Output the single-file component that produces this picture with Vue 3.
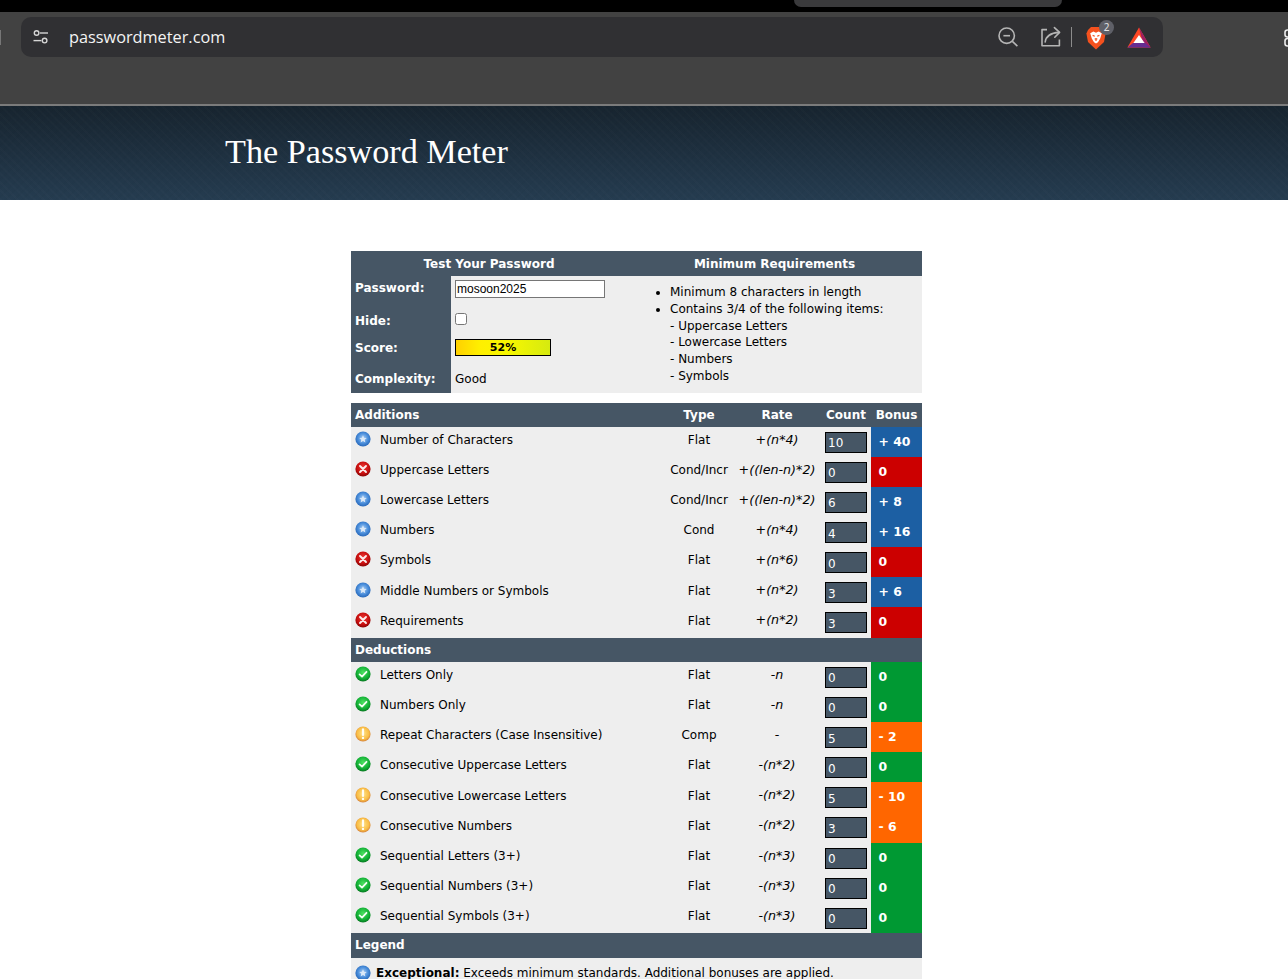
<template>
  <svg class="defs" width="0" height="0" aria-hidden="true">
    <defs>
      <radialGradient id="g-blue" cx="50%" cy="45%" r="60%">
        <stop offset="0" stop-color="#a9cdf2" /><stop offset="0.55" stop-color="#4b8fdc" /><stop offset="1" stop-color="#1f5eb0" />
      </radialGradient>
      <radialGradient id="g-red" cx="50%" cy="40%" r="62%">
        <stop offset="0" stop-color="#ee3a36" /><stop offset="0.65" stop-color="#c70e0e" /><stop offset="1" stop-color="#7f0404" />
      </radialGradient>
      <radialGradient id="g-green" cx="50%" cy="40%" r="62%">
        <stop offset="0" stop-color="#4be05f" /><stop offset="0.65" stop-color="#12b035" /><stop offset="1" stop-color="#07701f" />
      </radialGradient>
      <radialGradient id="g-amber" cx="50%" cy="45%" r="60%">
        <stop offset="0" stop-color="#ffe38a" /><stop offset="0.65" stop-color="#f9bd45" /><stop offset="1" stop-color="#c8703a" />
      </radialGradient>
      <symbol id="ico-exceed" viewBox="0 0 16 16">
        <circle cx="8" cy="8" r="7.6" fill="url(#g-blue)" />
        <path d="M8 4.2 L9.1 6.8 L11.7 7 L9.7 8.8 L10.4 11.6 L8 10 L5.6 11.6 L6.3 8.8 L4.3 7 L6.9 6.8 Z" fill="#dbe9f8" />
      </symbol>
      <symbol id="ico-fail" viewBox="0 0 16 16">
        <circle cx="8" cy="8" r="7.6" fill="url(#g-red)" />
        <path d="M5 5 L11 11 M11 5 L5 11" stroke="#fdecec" stroke-width="1.9" stroke-linecap="round" />
      </symbol>
      <symbol id="ico-pass" viewBox="0 0 16 16">
        <circle cx="8" cy="8" r="7.6" fill="url(#g-green)" />
        <path d="M4.6 8.4 L7 10.6 L11.5 5.8" fill="none" stroke="#f4fff4" stroke-width="1.8" stroke-linecap="round" stroke-linejoin="round" />
      </symbol>
      <symbol id="ico-warn" viewBox="0 0 16 16">
        <circle cx="8" cy="8" r="7.6" fill="url(#g-amber)" />
        <path d="M8 3.4 V9" stroke="#fffdf4" stroke-width="2.2" stroke-linecap="round" />
        <circle cx="8" cy="11.9" r="1.2" fill="#fffdf4" />
      </symbol>
    </defs>
  </svg>

  <div class="browser">
    <div class="tabstrip"><div class="tab-peek"></div></div>
    <div class="toolbar">
      <div class="edge-left"></div>
      <div class="addressbar">
        <svg class="site-ico" width="18" height="16" viewBox="0 0 18 16" fill="none" stroke="#d6d6d6" stroke-width="1.4">
          <circle cx="4.6" cy="4" r="2.3" /><path d="M8 4 H16" />
          <circle cx="12.6" cy="11.6" r="2.3" /><path d="M1.5 11.6 H9.4" />
        </svg>
        <span class="url">passwordmeter.com</span>
        <div class="addr-right">
          <svg width="22" height="22" viewBox="0 0 22 22" fill="none" stroke="#b5b5b5" stroke-width="1.6">
            <circle cx="9.7" cy="9.7" r="7.7" /><path d="M6.4 9.7 H13" /><path d="M15.4 15.4 L20.4 20.2" />
          </svg>
          <svg class="share" width="22" height="22" viewBox="0 0 22 22" fill="none" stroke="#b5b5b5" stroke-width="1.6" stroke-linecap="round" stroke-linejoin="round">
            <path d="M7 3.6 H2 V19.8 H19.4 V13.6" stroke-linecap="butt" />
            <path d="M5.2 16 C6 10 10 7 19 6.4" /><path d="M14.4 1.6 L19.6 6.4 L14.8 11.2" />
          </svg>
          <span class="divider"></span>
          <span class="brave">
            <svg width="20" height="24" viewBox="0 0 20 24">
              <path d="M5 1 H15 L18 4 L19.6 7.5 L18 16 L10 23.4 L2 16 L.4 7.5 L2 4 Z" fill="#f4511e" />
              <path d="M4.2 7.2 L7.4 5.6 L10 6.8 L12.6 5.6 L15.8 7.2 L14.2 12.4 L12 16.2 L10 17.6 L8 16.2 L5.8 12.4 Z" fill="#fff" />
              <path d="M6.6 9.4 L8.8 10.2 M13.4 9.4 L11.2 10.2 M10 12 V15 M8.6 13 H11.4" stroke="#f4511e" stroke-width="1.2" fill="none" />
            </svg>
            <span class="badge">2</span>
          </span>
          <svg class="bat" width="24" height="21" viewBox="0 0 24 21">
            <path d="M12 .5 L23.6 20.5 H.4 Z" fill="#ff4724" />
            <path d="M12 .5 L23.6 20.5 H17 Z" fill="#9e1f63" />
            <path d="M.4 20.5 L6 16 H18 L23.6 20.5 Z" fill="#662d91" />
            <path d="M12 8 L17.6 16 H6.4 Z" fill="#fff" />
          </svg>
        </div>
      </div>
      <svg class="edge-right" width="4" height="18" viewBox="0 0 4 18" fill="none" stroke="#ececec" stroke-width="1.6">
        <rect x="1" y="1" width="9" height="7" rx="2.5" />
        <rect x="1" y="9.5" width="9" height="7.5" rx="2.5" />
      </svg>
    </div>
  </div>

  <header class="site-head">
    <h1>The Password Meter</h1>
  </header>

  <main class="meter">
    <section class="top">
      <div class="top-head">
        <div class="th-left">Test Your Password</div>
        <div class="th-right">Minimum Requirements</div>
      </div>
      <div class="top-body">
        <div class="labels">
          <b class="l-pass">Password:</b>
          <b class="l-hide">Hide:</b>
          <b class="l-score">Score:</b>
          <b class="l-comp">Complexity:</b>
        </div>
        <div class="fields">
          <input class="pass-input" type="text" value="mosoon2025" />
          <input class="hide-check" type="checkbox" />
          <div class="score-bar">52%</div>
          <div class="complexity">Good</div>
        </div>
        <div class="reqs">
          <ul>
            <li>Minimum 8 characters in length</li>
            <li>Contains 3/4 of the following items:<br />- Uppercase Letters<br />- Lowercase Letters<br />- Numbers<br />- Symbols</li>
          </ul>
        </div>
      </div>
    </section>

    <section class="scores">
      <div class="band band-first cols">
        <b>Additions</b>
        <b class="center">Type</b>
        <b class="center">Rate</b>
        <b class="center count-h">Count</b>
        <b class="center">Bonus</b>
      </div>
      <div v-for="r in additions" :key="r.name" class="row cols">
        <div class="name"><svg class="status" width="16" height="16"><use :href="'#ico-' + r.status" /></svg>{{ r.name }}</div>
        <div class="center type">{{ r.type }}</div>
        <div class="center rate"><span>{{ r.sign }}</span><i>{{ r.rate }}</i></div>
        <div class="count-cell"><input class="count" type="text" :value="r.count" /></div>
        <div class="bonus" :class="r.status">{{ r.bonus }}</div>
      </div>

      <div class="band"><b>Deductions</b></div>
      <div v-for="r in deductions" :key="r.name" class="row cols">
        <div class="name"><svg class="status" width="16" height="16"><use :href="'#ico-' + r.status" /></svg>{{ r.name }}</div>
        <div class="center type">{{ r.type }}</div>
        <div class="center rate"><span>{{ r.sign }}</span><i>{{ r.rate }}</i></div>
        <div class="count-cell"><input class="count" type="text" :value="r.count" /></div>
        <div class="bonus" :class="r.status">{{ r.bonus }}</div>
      </div>

      <div class="band band-legend"><b>Legend</b></div>
      <div class="legend">
        <svg class="status" width="16" height="16"><use href="#ico-exceed" /></svg>
        <span><b>Exceptional:</b> Exceeds minimum standards. Additional bonuses are applied.</span>
      </div>
    </section>
  </main>
</template>

<script setup>
const additions = [
  { name: 'Number of Characters', type: 'Flat', sign: '+', rate: '(n*4)', count: 10, bonus: '+ 40', status: 'exceed' },
  { name: 'Uppercase Letters', type: 'Cond/Incr', sign: '+', rate: '((len-n)*2)', count: 0, bonus: '0', status: 'fail' },
  { name: 'Lowercase Letters', type: 'Cond/Incr', sign: '+', rate: '((len-n)*2)', count: 6, bonus: '+ 8', status: 'exceed' },
  { name: 'Numbers', type: 'Cond', sign: '+', rate: '(n*4)', count: 4, bonus: '+ 16', status: 'exceed' },
  { name: 'Symbols', type: 'Flat', sign: '+', rate: '(n*6)', count: 0, bonus: '0', status: 'fail' },
  { name: 'Middle Numbers or Symbols', type: 'Flat', sign: '+', rate: '(n*2)', count: 3, bonus: '+ 6', status: 'exceed' },
  { name: 'Requirements', type: 'Flat', sign: '+', rate: '(n*2)', count: 3, bonus: '0', status: 'fail' }
]

const deductions = [
  { name: 'Letters Only', type: 'Flat', sign: '-', rate: 'n', count: 0, bonus: '0', status: 'pass' },
  { name: 'Numbers Only', type: 'Flat', sign: '-', rate: 'n', count: 0, bonus: '0', status: 'pass' },
  { name: 'Repeat Characters (Case Insensitive)', type: 'Comp', sign: '-', rate: '', count: 5, bonus: '- 2', status: 'warn' },
  { name: 'Consecutive Uppercase Letters', type: 'Flat', sign: '-', rate: '(n*2)', count: 0, bonus: '0', status: 'pass' },
  { name: 'Consecutive Lowercase Letters', type: 'Flat', sign: '-', rate: '(n*2)', count: 5, bonus: '- 10', status: 'warn' },
  { name: 'Consecutive Numbers', type: 'Flat', sign: '-', rate: '(n*2)', count: 3, bonus: '- 6', status: 'warn' },
  { name: 'Sequential Letters (3+)', type: 'Flat', sign: '-', rate: '(n*3)', count: 0, bonus: '0', status: 'pass' },
  { name: 'Sequential Numbers (3+)', type: 'Flat', sign: '-', rate: '(n*3)', count: 0, bonus: '0', status: 'pass' },
  { name: 'Sequential Symbols (3+)', type: 'Flat', sign: '-', rate: '(n*3)', count: 0, bonus: '0', status: 'pass' }
]
</script>

<style>
html, body { height: 100%; overflow: hidden; background: #fff; }
</style>

<style scoped>
.defs { position: absolute; }

.browser { background: #424242; }
.tabstrip { height: 12px; background: #000; padding-left: 794px; }
.tab-peek { width: 268px; height: 7px; background: #3a3a3c; border-radius: 0 0 10px 10px; }
.toolbar {
  height: 94px; padding: 5px 0 0 21px; box-sizing: border-box; position: relative;
  border-bottom: 2px solid #7b7b7b;
}
.edge-left { position: absolute; left: 0; top: 18px; width: 1px; height: 15px; background: #777; }
.edge-right { position: absolute; left: 1284px; top: 17px; }
.addressbar {
  width: 1142px; height: 40px; background: #303033; border-radius: 10px;
  display: flex; align-items: center; padding: 0 12px 0 11px; box-sizing: border-box;
}
.url {
  margin-left: 19px; color: #f4f4f4; font-size: 16.3px;
  font-family: "Open Sans", "Noto Sans", sans-serif;
}
.site-ico { flex: none; }
.addr-right { margin-left: auto; display: flex; align-items: center; }
.share { margin-left: 21px; }
.divider { width: 1px; height: 20px; background: #8c8c8c; margin: 0 14px 0 9px; }
.brave { position: relative; display: block; width: 20px; height: 24px; margin-top: 2px; }
.brave svg { display: block; }
.badge {
  position: absolute; left: 13px; top: -6px; width: 15px; height: 15px; border-radius: 50%;
  background: #5f6068; color: #e4e4e4; font: 10px/15px "Noto Sans", sans-serif; text-align: center;
}
.bat { margin-left: 21px; }

.site-head {
  height: 94px; box-sizing: border-box; padding: 26px 0 0 225px;
  background:
    repeating-linear-gradient(45deg, rgba(255,255,255,.012) 0 2px, transparent 2px 6px),
    repeating-linear-gradient(-45deg, rgba(0,0,0,.018) 0 2px, transparent 2px 6px),
    linear-gradient(#17242f, #253c50);
}
.site-head h1 {
  margin: 0; color: #fff; font: 400 34.2px/40px "Liberation Serif", "DejaVu Serif", serif;
}

.meter {
  width: 571px; margin: 51px 0 0 351px; color: #000;
  font-family: "DejaVu Sans", Verdana, sans-serif; font-size: 12px;
}
.top-head {
  display: flex; height: 25px; align-items: center; background: #465665; color: #fff;
  font-weight: 700;
}
.th-left { width: 276px; text-align: center; }
.th-right { flex: 1; text-align: center; }
.top-body { display: flex; height: 117px; background: #eee; }
.labels {
  width: 100px; background: #465665; color: #fff; display: flex; flex-direction: column;
  padding-left: 4px; box-sizing: border-box; line-height: 15px;
}
.l-pass { margin-top: 5px; }
.l-hide { margin-top: 18px; }
.l-score { margin-top: 12px; }
.l-comp { margin-top: 16px; }
.fields {
  width: 187px; padding-left: 4px; box-sizing: border-box; display: flex; flex-direction: column;
  align-items: flex-start;
}
.pass-input {
  width: 150px; height: 18px; margin: 4px 0 0; box-sizing: border-box; padding: 0 1px;
  border: 1px solid #767676; background: #fff; font: 12px "Liberation Sans", Arial, sans-serif; color: #000;
  outline: none;
}
.hide-check { margin: 15px 0 0; width: 12px; height: 12px; }
.score-bar {
  width: 96px; height: 17px; margin-top: 14px; box-sizing: border-box; border: 1px solid #000;
  background: linear-gradient(90deg, #ffd000, #ffef00 25%, #f7f700 55%, #d6ea10);
  text-align: center; font-weight: 700; font-size: 11px; line-height: 15px;
}
.complexity { margin-top: 16px; line-height: 15px; }
.reqs { flex: 1; }
.reqs ul { margin: 8px 0 0; padding: 0 0 0 32px; line-height: 16.8px; }

.scores { margin-top: 9.7px; background: #eee; height: 576px; }
.cols { display: grid; grid-template-columns: 318px 60px 96px 46px 51px; }
.band {
  background: #465665; color: #fff; padding-left: 4px; height: 24.3px; line-height: 25px;
  box-sizing: border-box;
}
.band-first { height: 24px; }
.band-legend { height: 25px; }
.band.cols { padding-left: 0; }
.band.cols > b:first-child { padding-left: 4px; }
.band .count-h { padding-right: 4px; }
.row { height: 30.14px; line-height: 15px; }
.name { display: flex; align-items: flex-start; padding: 6.25px 0 0 4px; }
.status { flex: none; margin-right: 9px; margin-top: -2px; margin-bottom: -2px; }
.center { text-align: center; }
.row .center { white-space: nowrap; }
.type { padding-top: 6.25px; }
.rate { font-size: 12.7px; padding-top: 5px; }
.rate i { font-style: italic; }
.count-cell { padding-top: 5px; }
.count {
  display: block; width: 42px; height: 21px; box-sizing: border-box; border: 1px solid #000;
  background: #465665; color: #fff; padding: 2px 2px 0; outline: none;
  font: 12px "DejaVu Sans", sans-serif;
}
.bonus {
  color: #fff; font-weight: 700; font-size: 12.4px; padding: 7px 0 0 7.5px; line-height: 16px;
}
.bonus.exceed { background: #1c5fa3; }
.bonus.fail { background: #cc0000; }
.bonus.pass { background: #009933; }
.bonus.warn { background: #ff6600; }
.legend { display: flex; align-items: flex-start; padding: 7px 0 0 4px; line-height: 16px; }
.legend .status { margin: 0 5px 0 0; }
</style>
